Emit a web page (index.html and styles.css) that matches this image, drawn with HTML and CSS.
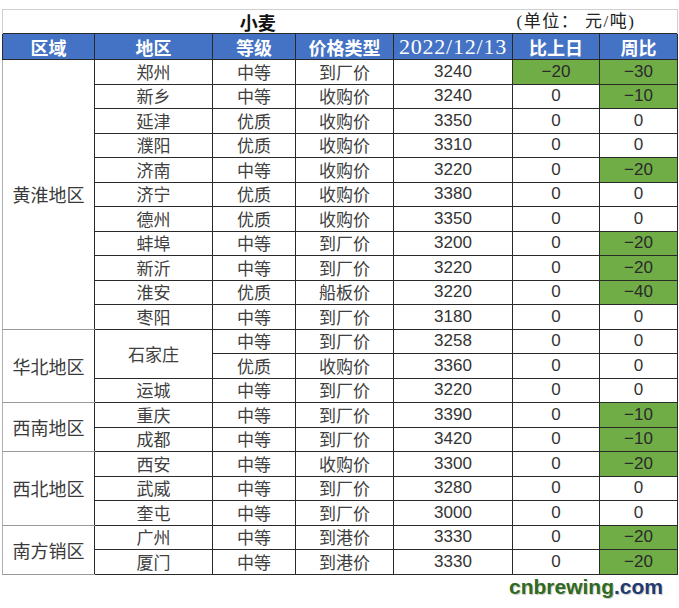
FILE: index.html
```html
<!DOCTYPE html>
<html lang="zh">
<head>
<meta charset="utf-8">
<link rel="stylesheet" href="styles.css">
</head>
<body>
<div class="page">
<table class="grid">
  <colgroup>
    <col class="c1"><col class="c2"><col class="c3"><col class="c4"><col class="c5"><col class="c6"><col class="c7">
  </colgroup>
  <tr class="title">
    <td colspan="5" class="t-main">小麦</td>
    <td colspan="2" class="t-unit">(单位： 元/吨)</td>
  </tr>
  <tr class="head">
    <th>区域</th><th>地区</th><th>等级</th><th>价格类型</th><th class="date">2022/12/13</th><th>比上日</th><th>周比</th>
  </tr>
  <tr><td rowspan="11" class="reg">黄淮地区</td><td>郑州</td><td>中等</td><td>到厂价</td><td class="n">3240</td><td class="n g">−20</td><td class="n g">−30</td></tr>
  <tr><td>新乡</td><td>中等</td><td>收购价</td><td class="n">3240</td><td class="n">0</td><td class="n g">−10</td></tr>
  <tr><td>延津</td><td>优质</td><td>收购价</td><td class="n">3350</td><td class="n">0</td><td class="n">0</td></tr>
  <tr><td>濮阳</td><td>优质</td><td>收购价</td><td class="n">3310</td><td class="n">0</td><td class="n">0</td></tr>
  <tr><td>济南</td><td>中等</td><td>收购价</td><td class="n">3220</td><td class="n">0</td><td class="n g">−20</td></tr>
  <tr><td>济宁</td><td>优质</td><td>收购价</td><td class="n">3380</td><td class="n">0</td><td class="n">0</td></tr>
  <tr><td>德州</td><td>优质</td><td>收购价</td><td class="n">3350</td><td class="n">0</td><td class="n">0</td></tr>
  <tr><td>蚌埠</td><td>中等</td><td>到厂价</td><td class="n">3200</td><td class="n">0</td><td class="n g">−20</td></tr>
  <tr><td>新沂</td><td>中等</td><td>到厂价</td><td class="n">3220</td><td class="n">0</td><td class="n g">−20</td></tr>
  <tr><td>淮安</td><td>优质</td><td>船板价</td><td class="n">3220</td><td class="n">0</td><td class="n g">−40</td></tr>
  <tr><td>枣阳</td><td>中等</td><td>到厂价</td><td class="n">3180</td><td class="n">0</td><td class="n">0</td></tr>
  <tr><td rowspan="3" class="reg">华北地区</td><td rowspan="2">石家庄</td><td>中等</td><td>到厂价</td><td class="n">3258</td><td class="n">0</td><td class="n">0</td></tr>
  <tr><td>优质</td><td>收购价</td><td class="n">3360</td><td class="n">0</td><td class="n">0</td></tr>
  <tr><td>运城</td><td>中等</td><td>到厂价</td><td class="n">3220</td><td class="n">0</td><td class="n">0</td></tr>
  <tr><td rowspan="2" class="reg">西南地区</td><td>重庆</td><td>中等</td><td>到厂价</td><td class="n">3390</td><td class="n">0</td><td class="n g">−10</td></tr>
  <tr><td>成都</td><td>中等</td><td>到厂价</td><td class="n">3420</td><td class="n">0</td><td class="n g">−10</td></tr>
  <tr><td rowspan="3" class="reg">西北地区</td><td>西安</td><td>中等</td><td>收购价</td><td class="n">3300</td><td class="n">0</td><td class="n g">−20</td></tr>
  <tr><td>武威</td><td>中等</td><td>到厂价</td><td class="n">3280</td><td class="n">0</td><td class="n">0</td></tr>
  <tr><td>奎屯</td><td>中等</td><td>到厂价</td><td class="n">3000</td><td class="n">0</td><td class="n">0</td></tr>
  <tr><td rowspan="2" class="reg">南方销区</td><td>广州</td><td>中等</td><td>到港价</td><td class="n">3330</td><td class="n">0</td><td class="n g">−20</td></tr>
  <tr><td>厦门</td><td>中等</td><td>到港价</td><td class="n">3330</td><td class="n">0</td><td class="n g">−20</td></tr>
</table>
<div class="mark"><span class="mk-a">cnbrewing</span><span class="mk-b">.com</span></div>
</div>
</body>
</html>
```
FILE: styles.css
```css
html, body {
  margin: 0;
  padding: 0;
  background: #ffffff;
}
.page {
  padding: 9px 0 0 2px;
  width: 677px;
}
.grid {
  border-collapse: collapse;
  table-layout: fixed;
  width: 675px;
  font-family: "Noto Sans CJK SC", sans-serif;
  font-size: 17px;
  color: #404040;
}
.c1 { width: 92px; }
.c2 { width: 118px; }
.c3 { width: 83px; }
.c4 { width: 98px; }
.c5 { width: 119px; }
.c6 { width: 87px; }
.c7 { width: 78px; }
.grid td, .grid th {
  border: 1px solid #2a2a2a;
  padding: 0;
  text-align: center;
  vertical-align: middle;
  line-height: 22px;
  overflow: hidden;
  white-space: nowrap;
}
.grid tr { height: 24.5px; }
.grid tr.title { height: 24px; }
.grid tr.head { height: 26px; }
.grid .title td {
  border: none;
  border-top: 1px solid #d0d0d0;
  color: #111;
}
.grid .title td:first-child { border-left: 1px solid #d0d0d0; }
.grid .title td:last-child { border-right: 1px solid #d0d0d0; }
.t-main {
  font-weight: bold;
  font-size: 18px;
  padding-right: 6px;
}
.grid .title .t-unit {
  text-align: left;
  padding-left: 4px;
  font-family: "Liberation Serif", "Noto Sans CJK SC", serif;
  font-size: 17px;
  letter-spacing: 1.5px;
  color: #222;
}
.grid .head th {
  background: #4472c4;
  color: #ffffff;
  font-weight: bold;
  font-size: 18px;
  border-color: #2a2a2a;
}
.grid .head th.date {
  font-family: "Liberation Serif", serif;
  font-weight: normal;
  font-size: 22px;
  letter-spacing: 0.8px;
}
.grid td.reg {
  border-left: 1px solid #b0b0b0;
  border-top: 1px solid #9a9a9a;
  border-bottom: 1px solid #9a9a9a;
  font-size: 18px;
  color: #3a3a3a;
}
.grid td.n {
  font-family: "Liberation Sans", sans-serif;
  font-size: 17px;
  color: #333;
}
.grid td.g {
  background: #70ad47;
  color: #2a2a2a;
}
.mark {
  text-align: right;
  padding-right: 16px;
  font-family: "Liberation Sans", sans-serif;
  font-weight: bold;
  font-size: 21px;
  line-height: 24px;
  text-shadow: 1px 1px 1px #c8c8c8;
}
.mk-a { color: #2f6a22; }
.mk-b { color: #1f3a70; }
```
